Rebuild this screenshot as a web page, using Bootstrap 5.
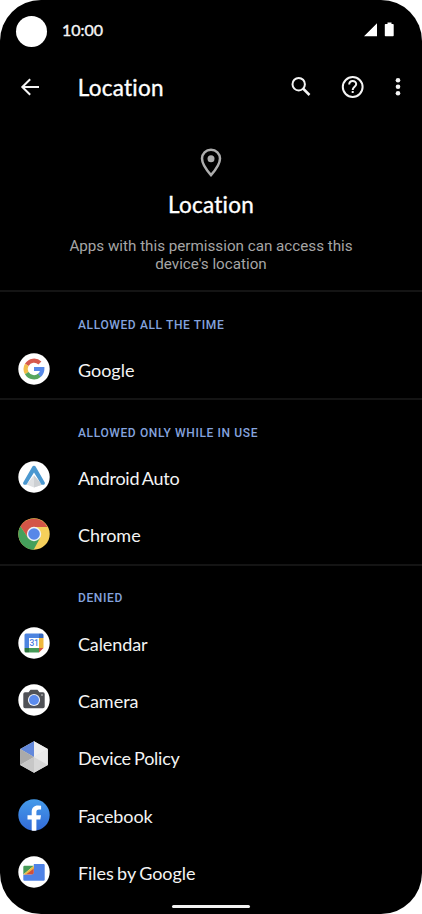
<!DOCTYPE html>
<html lang="en">
<head>
<meta charset="utf-8">
<meta name="viewport" content="width=device-width, initial-scale=1">
<title>Location</title>
<link href="https://cdn.jsdelivr.net/npm/bootstrap@5.3.0/dist/css/bootstrap.min.css" rel="stylesheet">
<style>
body{background:#fff;font-family:Lato,"Liberation Sans",sans-serif;font-variant-ligatures:none}
.phone{width:422px;height:914px;background:#000;border-radius:41px;color:#f4f4f4}
.status{height:62px;padding:16px 27px 0 16px}
.lens{width:31px;height:31px;background:#fff}
.clock{font-size:16px;font-weight:400;line-height:20px;margin:4px 0 0 15px;-webkit-text-stroke:.4px #f4f4f4}
.signals{margin-top:6px}
.toolbar{height:50px;padding:0 16px 0 18px}
.title{font-size:22.5px;font-weight:400;line-height:28px;color:#fff;letter-spacing:.25px;-webkit-text-stroke:.35px #fff}
.toolbar .title{margin:1px 0 0 35.7px}
.intro{height:180px;padding-top:36px;border-bottom:2px solid #141414}
.intro .title{margin-top:13px}
.intro-text{font-family:Roboto,sans-serif;font-size:15.2px;line-height:18.3px;color:#a6a6a6;margin-top:18px;width:300px}
.group{border-bottom:2px solid #141414}
.group-last{border:0}
.group-title{height:48.7px;padding:24px 0 0 78px;font-family:Roboto,sans-serif;font-size:12px;font-weight:500;line-height:18px;letter-spacing:.62px;color:#84a3de}
.group-last .group-title{padding-top:23.2px}
.app{height:57.4px;padding:1.2px 0 0 18.3px;font-size:18px;line-height:24px}
.app svg{margin:0 27.6px 2px 0;flex:none}
.tight{letter-spacing:-.24px;word-spacing:-1.2px}
.snug{letter-spacing:-.08px}
.close-words{letter-spacing:-.05px;word-spacing:-1.1px}
.homebar{left:172px;top:905px;width:78px;height:2.5px;background:#f2f2f2}
</style>
</head>
<body>
<main class="phone position-relative overflow-hidden">
 <div class="status d-flex align-items-start">
  <span class="lens rounded-circle"></span><span class="clock">10:00</span>
  <svg class="signals ms-auto" width="32" height="16" viewBox="0 0 32 16" fill="#fff"><path d="M1 14.3H14V1.3zM22.5 2H24.5V.6H28.5V2H30q.7 0 .7.7V13.6q0 .7-.7.7H22.5q-.7 0-.7-.7V2.7q0-.7.7-.7z"/></svg>
 </div>
 <header class="toolbar d-flex align-items-center">
  <svg width="24" height="24" viewBox="0 0 24 24" fill="none" stroke="#f4f4f4" stroke-width="2"><path d="M21 12H4.8M12.2 4.2L4.3 12L12.2 19.8"/></svg>
  <h1 class="title mb-0">Location</h1>
  <svg class="ms-auto" width="122" height="28" viewBox="284 73 122 28" fill="none" stroke="#f4f4f4" stroke-width="2"><circle cx="298.7" cy="84.2" r="6.2"/><path d="M303 88.5l6.5 6.5" stroke-width="2.5"/><circle cx="352.7" cy="87" r="9.9"/><path d="M349.2 84.6c0-4.9 7-4.7 7-.5 0 2.7-3.5 2.9-3.5 6"/><g fill="#f4f4f4" stroke="none"><path d="M351.7 91h2v2h-2z"/><circle cx="398" cy="80.3" r="2.3"/><circle cx="398" cy="86.8" r="2.3"/><circle cx="398" cy="93.3" r="2.3"/></g></svg>
 </header>
 <section class="intro d-flex flex-column align-items-center text-center">
  <svg width="22" height="30" viewBox="0 0 22 30"><path d="M11 1.7c-5.1 0-9 3.9-9 8.9C2 17 11 27.2 11 27.2S20 17 20 10.6c0-5-3.9-8.9-9-8.9z" fill="none" stroke="#adadad" stroke-width="2.5"/><circle cx="11" cy="10.7" r="3.5" fill="#adadad"/></svg>
  <h2 class="title mb-0">Location</h2>
  <p class="intro-text mb-0">Apps with this permission can access this device's location</p>
 </section>
 <section class="group">
  <div class="group-title">ALLOWED ALL THE TIME</div>
  <div class="app d-flex align-items-center"><svg width="32" height="32" viewBox="0 0 32 32"><circle cx="16" cy="16" r="15.7" fill="#fff"/><g fill="none" stroke-width="4.2"><path d="M21.9 10.1A8.3 8.3 0 0 0 8.8 11.9" stroke="#d6594d"/><path d="M8.8 11.8A8.3 8.3 0 0 0 8.8 20.2" stroke="#f2bf4c"/><path d="M8.8 20.1A8.3 8.3 0 0 0 21.6 22.1" stroke="#57a65f"/><path d="M21.4 22.3A8.3 8.3 0 0 0 24.3 16H16" stroke="#5789e8"/></g></svg><span>Google</span></div>
 </section>
 <section class="group">
  <div class="group-title">ALLOWED ONLY WHILE IN USE</div>
  <div class="app d-flex align-items-center"><svg width="32" height="32" viewBox="0 0 32 32"><circle cx="16" cy="16" r="15.7" fill="#fff"/><path d="M16 14.5L8.5 23.5L16 26.5L24 23.8z" fill="#dfe1e3"/><path d="M16 14.5V26.5L24 23.8z" fill="#cdd0d3"/><path d="M16 4.8Q17.3 4.8 18 6.2L26.8 21.5Q27.3 23.8 25 23.8H23.6L16 11.5L8.4 23.8H7Q4.7 23.8 5.2 21.5L14 6.2Q14.7 4.8 16 4.8z" fill="#4b98d0"/></svg><span class="tight">Android Auto</span></div>
  <div class="app d-flex align-items-center"><svg width="32" height="32" viewBox="0 0 32 32"><circle cx="16" cy="16" r="15.7" fill="#f6d05b"/><path d="M2.4 8.2A15.7 15.7 0 0 1 29.6 8.9H16L9.8 19.5z" fill="#d35547"/><path d="M2.4 8.2A15.7 15.7 0 0 0 15.6 31.7L22.3 19.5L9.8 19.6z" fill="#45a05b"/><circle cx="16" cy="16" r="7.2" fill="#f0f3f8"/><circle cx="16" cy="16" r="5.8" fill="#5787e8"/></svg><span>Chrome</span></div>
 </section>
 <section class="group group-last">
  <div class="group-title">DENIED</div>
  <div class="app d-flex align-items-center"><svg width="32" height="32" viewBox="0 0 32 32"><circle cx="16" cy="16" r="15.7" fill="#fff"/><path d="M8 6.5H21V11H11V21H6.5V8Q6.5 6.5 8 6.5z" fill="#4d84df"/><path d="M21 6.5H24Q25.5 6.5 25.5 8V11H21z" fill="#3466bd"/><path d="M21 11H25.5V21H21z" fill="#efb83c"/><path d="M11 21H21V25.5H11z" fill="#459a58"/><path d="M6.5 21H11V25.5H8Q6.5 25.5 6.5 24z" fill="#2c743d"/><path d="M21 21H25.5L21 25.5z" fill="#d8503f"/><text x="16" y="19" text-anchor="middle" font-family="Roboto,sans-serif" font-size="8.4" font-weight="500" letter-spacing="-.2" fill="#477de0">31</text></svg><span class="snug">Calendar</span></div>
  <div class="app d-flex align-items-center"><svg width="32" height="32" viewBox="0 0 32 32"><circle cx="16" cy="16" r="15.7" fill="#fff"/><path d="M7 8.3H10.6L12.5 5.8H19.5L21.4 8.3H25Q26.7 8.3 26.7 10V22.5Q26.7 24.2 25 24.2H7Q5.3 24.2 5.3 22.5V10Q5.3 8.3 7 8.3z" fill="#505257"/><circle cx="16" cy="16" r="6.1" fill="#edf1fa"/><circle cx="16" cy="16" r="5" fill="#5b8bed"/><circle cx="24" cy="11" r=".8" fill="#ddd"/></svg><span>Camera</span></div>
  <div class="app d-flex align-items-center"><svg width="32" height="32" viewBox="0 0 32 32"><path d="M16 .3L29.8 8.1V23.9L16 31.7L2.2 23.9V8.1z" fill="#dedede"/><path d="M16 .3V16L2.2 8.1z" fill="#6288db"/><path d="M16 .3L29.8 8.1L16 16z" fill="#ededed"/><path d="M2.2 8.1L16 16L2.2 23.9z" fill="#aaa"/><path d="M2.2 23.9L16 16V31.7z" fill="#c7c7c7"/><path d="M16 16L29.8 23.9L16 31.7z" fill="#d7d7d7"/><path d="M16 16L29.8 8.1V23.9z" fill="#e9e9e9"/></svg><span class="tight">Device Policy</span></div>
  <div class="app d-flex align-items-center"><svg width="32" height="32" viewBox="0 0 32 32"><defs><linearGradient id="fb" x2="0" y2="1"><stop stop-color="#459bea"/><stop offset="1" stop-color="#326ad8"/></linearGradient></defs><circle cx="16" cy="16" r="15.7" fill="url(#fb)"/><path d="M13.7 31.5V20.6H9.5V16.2H13.7V13C13.7 8.7 16 6.5 20 6.5Q21.8 6.5 23.1 6.8V10.6H21C19 10.6 18.4 11.5 18.4 13.2V16.2H23L22.3 20.6H18.4V31.5Q16 31.9 13.7 31.5z" fill="#fff"/></svg><span class="snug">Facebook</span></div>
  <div class="app d-flex align-items-center"><svg width="32" height="32" viewBox="0 0 32 32"><circle cx="16" cy="16" r="15.7" fill="#fff"/><path d="M15.8 7.9H25.5Q26.7 7.9 26.7 9V23.7Q26.7 24.8 25.5 24.8H6.5Q5.3 24.8 5.3 23.7V18.5H13Q15.8 18.5 15.8 15.5z" fill="#4f82e6"/><path d="M6.5 9.7H15.8L5.3 18.5V11Q5.3 9.7 6.5 9.7z" fill="#459a57"/><path d="M15.8 11V16.5Q15.8 18.5 13.8 18.5H6.5z" fill="#cf513d"/><path d="M15.8 9.7V12.5L8 18.5H5.3z" fill="#edbd45"/></svg><span class="close-words">Files by Google</span></div>
 </section>
 <div class="homebar position-absolute rounded-pill"></div>
</main>
<script src="https://cdn.jsdelivr.net/npm/bootstrap@5.3.0/dist/js/bootstrap.bundle.min.js"></script>
</body>
</html>
